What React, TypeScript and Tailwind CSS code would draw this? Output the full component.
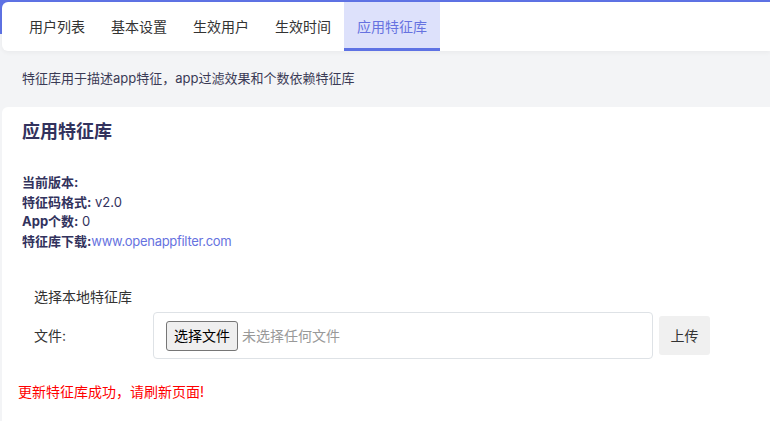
import React from "react";

const tabs = ["用户列表", "基本设置", "生效用户", "生效时间", "应用特征库"];

export default function App() {
  return (
    <div
      className="h-[421px] w-[770px] overflow-hidden bg-[linear-gradient(to_bottom,#5e72e4_0px,#5e72e4_34px,#f3f4f6_34px)] text-[13px] text-[#333]"
      style={{ fontFamily: 'Inter, "Noto Sans CJK SC", sans-serif' }}
    >
      <div className="ml-[2px] mt-[2px] flex h-[49px] rounded-l-[6px] bg-white pl-[14px] shadow-[0_2px_4px_rgba(0,0,0,0.04)]">
        {tabs.map((t, i) =>
          i === 4 ? (
            <div
              key={t}
              className="flex items-center border-b-[3px] border-[#5e72e4] bg-[#dde1fb] px-[13px] pt-[3px] text-[14px] text-[#6672e0]"
            >
              {t}
            </div>
          ) : (
            <div key={t} className="flex items-center px-[13px] text-[14px] text-[#333]">
              {t}
            </div>
          )
        )}
      </div>
      <div className="flex h-[56px] items-center pl-[22px] text-[13px] text-[#3a3a55]">
        特征库用于描述app特征，app过滤效果和个数依赖特征库
      </div>
      <div className="ml-[2px] h-[400px] rounded-tl-[6px] bg-white pl-5 pt-[12px]">
        <h2 className="text-[18px] font-bold leading-[26px] text-[#32325d]">应用特征库</h2>
        <div className="mt-[28px] leading-[19.6px] text-[#32325d]">
          <div>
            <span className="font-bold">当前版本:</span>
          </div>
          <div>
            <span className="font-bold">特征码格式:</span> v2.0
          </div>
          <div>
            <span className="font-bold">App个数:</span> 0
          </div>
          <div>
            <span className="font-bold">特征库下载:</span>
            <span className="tracking-[-0.3px] text-[#6672e0]">www.openappfilter.com</span>
          </div>
        </div>
        <div className="mt-[36px] pl-3 text-[14px]">
          <div className="leading-[20px]">选择本地特征库</div>
          <div className="mt-[5px] flex items-center">
            <div className="w-[119px]">文件:</div>
            <div className="flex h-[47px] w-[500px] items-center rounded-[4px] border border-[#dee2e6] pl-3">
              <button className="h-[30px] w-[72px] rounded-[3px] border border-[#767676] bg-[#efefef] text-[14px] text-black">
                选择文件
              </button>
              <span className="ml-1 text-[#999]">未选择任何文件</span>
            </div>
            <button className="ml-[6px] h-[39px] w-[51px] rounded-[3px] bg-[#f0f0f0] text-[14px] text-[#333]">
              上传
            </button>
          </div>
        </div>
        <div className="-ml-1 mt-[22px] text-[14px] text-[#ff0000]">更新特征库成功，请刷新页面!</div>
      </div>
    </div>
  );
}
